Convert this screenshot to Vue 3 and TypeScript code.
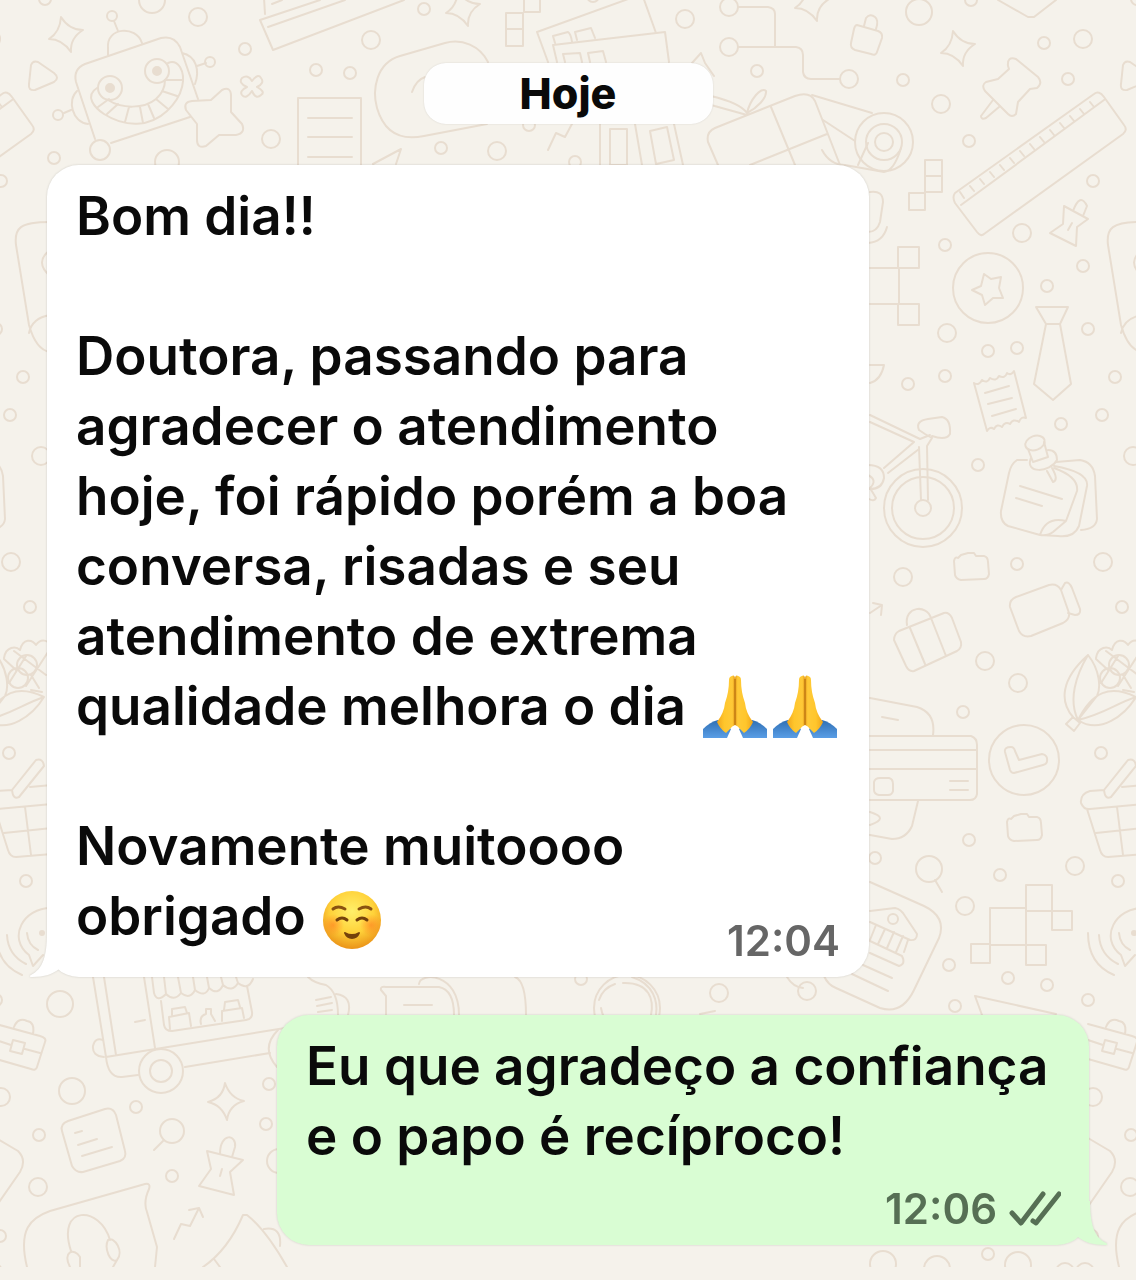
<script setup lang="ts">
interface Message {
  id: number
  side: 'in' | 'out'
  time: string
  paragraphs: { text: string; emoji?: 'pray' | 'smile'; count?: number }[]
}

const messages: Message[] = [
  {
    id: 1,
    side: 'in',
    time: '12:04',
    paragraphs: [
      { text: 'Bom dia!!' },
      {
        text: 'Doutora, passando para agradecer o atendimento hoje, foi rápido porém a boa conversa, risadas e seu atendimento de extrema qualidade melhora o dia',
        emoji: 'pray',
        count: 2,
      },
      { text: 'Novamente muitoooo obrigado', emoji: 'smile', count: 1 },
    ],
  },
  {
    id: 2,
    side: 'out',
    time: '12:06',
    paragraphs: [{ text: 'Eu que agradeço a confiança e o papo é recíproco!' }],
  },
]

// Loose dots of the wallpaper: x, y, radius
const dots: number[][] = [
  [45, -1, 6], [152, 0, 13], [198, 17, 9], [245, 49, 6], [271, 139, 9], [316, 70, 6], [350, 73, 6],
  [371, 40, 9], [167, 162, 12], [54, 158, 6], [1, 181, 6], [424, 9, 6], [685, 19, 9], [757, 71, 6],
  [497, 151, 9], [441, 148, 6], [529, 125, 6], [575, 162, 6], [593, -4, 6], [919, 12, 13], [971, 0, 6],
  [1044, 43, 6], [1083, 39, 9], [1068, 79, 6], [903, 80, 6], [941, 104, 9], [969, 141, 6],
  [1022, 233, 9], [945, 245, 6], [1083, 266, 6], [1047, 286, 6], [947, 333, 9], [1088, 329, 6],
  [988, 351, 6], [1017, 348, 6], [945, 376, 6], [908, 384, 6], [1115, 377, 6], [1102, 415, 6],
  [1061, 424, 6], [978, 465, 6], [1133, 456, 9], [1103, 562, 9], [1017, 564, 6], [903, 577, 9],
  [1122, 607, 6], [985, 661, 9], [1018, 683, 9], [963, 712, 6], [1101, 753, 6], [969, 840, 6],
  [875, 858, 6], [1000, 875, 6], [965, 906, 9], [1075, 866, 9], [1118, 881, 6], [949, 965, 6],
  [1008, 978, 6], [1047, 985, 6], [1088, 1000, 6], [955, 1006, 6], [807, 991, 9], [719, 993, 9],
  [581, 979, 6], [60, 1004, 13], [72, 1091, 13], [136, 1107, 6], [39, 1135, 6], [38, 1187, 9],
  [1, 1097, 9], [172, 1176, 6], [269, 1084, 6], [266, 1124, 6], [279, 1161, 12], [0, 1236, 6],
  [883, 1264, 13], [937, 1269, 13], [988, 1254, 6], [1018, 1265, 13], [1065, 1272, 9], [1085, 1272, 9],
]
</script>

<template>
  <main class="chat">
    <svg class="wallpaper" aria-hidden="true">
      <defs>
        <path id="sparkle" d="M-5-18Q3-5 17-5Q4 3 5 17Q-4 4-17 4Q-6-3-5-18Z" />
        <g id="tile">
          <circle v-for="(d, i) in dots" :key="i" :cx="d[0]" :cy="d[1]" :r="d[2]" />
          <!-- sparkles -->
          <use href="#sparkle" x="66" y="35" />
          <use href="#sparkle" x="463" y="9" />
          <use href="#sparkle" x="812" y="4" />
          <use href="#sparkle" x="958" y="49" />
          <path d="M225 1083Q230 1098 244 1101Q229 1105 227 1120Q222 1105 208 1102Q223 1098 225 1083Z" />
          <!-- robot -->
          <path d="M38 62L54 73Q60 78 54 82L35 90Q28 91 29 84L31 65Q33 60 38 62Z" />
          <path d="M95 139L76 82Q73 69 85 64L161 38Q174 35 180 47L198 99M190 117L111 143M108 55V48C106 27 136 25 142 43M118 31L114 21M182 53C196 56 200 70 195 84M197 66L206 63M77 91C67 100 72 122 88 124M71 110L64 113" />
          <circle cx="100" cy="150" r="10" /><circle cx="112" cy="16" r="5" /><circle cx="210" cy="62" r="5" /><circle cx="58" cy="115" r="5" />
          <circle cx="110" cy="88" r="12" /><circle cx="157" cy="71" r="12" />
          <circle class="fill" cx="110" cy="88" r="4" /><circle class="fill" cx="157" cy="71" r="4" />
          <path d="M97 88C84 96 95 108 104 114C126 128 150 127 167 111C184 95 186 77 180 67Q175 60 168 63M108 100C122 109 144 109 156 99C164 92 165 86 165 80M165 80H183M162 91L177 96M156 99L168 109M148 104L154 118M140 107L143 123M129 107L125 122M118 104L107 114M109 99L98 107" />
          <path d="M211 100L222 90Q231 86 231 96V112L242 124Q246 133 236 135H219L206 146Q197 149 197 140V124L186 110Q183 102 192 101Z" />
          <path d="M252 81Q258 73 261 78Q265 83 257 87Q266 92 261 95Q256 100 252 91Q246 100 242 95Q239 91 247 87Q238 83 242 78Q248 74 252 81Z" />
          <!-- notepad, envelope, card, blocks -->
          <path d="M298 170V98H361V170M308 118H352M308 137H352M308 157H352" />
          <path d="M320 0L260 20L273 50L404 0M268 27L345 0M264-2L265 14M272 4L282 0" />
          <path d="M488 62C480 46 462 38 445 43L400 56C376 63 372 90 377 108C384 132 400 141 424 136L487 124M412 92Q416 80 425 77" />
          <path d="M506 13H523V46H506ZM506 29H523M524-5H540V12H524Z" />
          <path d="M548 62L537 32L642-6L656 33M557 62L553 45L665 32L669 62M555 43L553 36L568 32Q571 34 572 42M577 40L575 32L591 28L595 38M565 62L563 54L580 53L582 62M590 62L588 53L603 51L606 62" />
          <circle cx="729" cy="7" r="9" /><circle cx="729" cy="47" r="9" /><circle cx="849" cy="79" r="9" />
          <path d="M738 7H768Q775 8 775 14V47M738 47H796Q803 48 803 55V72Q804 79 811 79H840M692 63L701 53L705 63L714 76" />
          <path d="M373 164L401 149L396 164M548 150L556 133L565 137L573 122M600 124V165M635 124L642 165M674 124L683 165M610 129H627V165H610ZM650 131L667 127L674 160L656 164Z" />
          <!-- gift and tape -->
          <path d="M718 165L708 142Q706 132 715 128L795 96Q810 91 815 101L840 165M771 107L795 165M750 165L827 134M747 113C750 100 761 86 766 91C767 98 757 108 747 113M711 96Q740 103 747 113M711 105L747 115" />
          <circle cx="884" cy="142" r="29" /><circle cx="884" cy="142" r="18" /><circle cx="884" cy="142" r="9" />
          <path d="M812 95L872 113M823 120L855 141M822 150Q830 165 845 165L884 172Q894 171 901 148M858 165L868 143" />
          <path d="M857 25L878 31Q883 33 882 38L877 52Q876 56 871 54L855 50Q850 48 851 43L854 29Q855 25 857 25ZM864 26L866 18Q870 13 875 17Q879 20 876 29" />
          <path d="M998 0L1028 17L1034 17L1056 0" />
          <path d="M1008 66Q1007 56 1016 59L1038 77Q1043 83 1037 88L1030 89L1018 102L1016 114Q1012 118 1008 114L985 91Q981 85 986 82L998 79L1009 69ZM993 100L981 116Q981 120 986 118L999 107" />
          <!-- ruler -->
          <path d="M955 193L1094 94Q1099 90 1104 97L1124 125Q1128 130 1123 134L984 234Q981 237 977 232L955 203Q952 197 955 193ZM961 205L1104 100M960 192L964 198M970 186L974 191M980 179L984 184M990 172L994 177M1000 165L1004 170M1010 158L1014 163M1020 151L1024 156M1030 144L1034 149M1040 137L1044 142M1050 130L1054 135M1060 123L1064 128M1070 116L1074 121M1080 109L1084 114M1090 102L1094 107" />
          <path d="M925 160H942V192H925ZM925 176H942M909 193H925V210H909ZM870 192Q883 190 883 202L880 222Q877 232 868 232M887 227Q883 242 868 243" />
          <path d="M1064 206L1088 219L1077 227L1076 246L1050 233L1063 224ZM1073 211Q1080 192 1087 206L1083 216M1072 223L1068 230" />
          <!-- nodes, badge, tie, receipt -->
          <path d="M898 247H919V268H898ZM898 304H919V325H898ZM870 268H898M899 268V304M870 304H898" />
          <circle cx="988" cy="288" r="35" />
          <path d="M984 274L991 279L1001 277L999 288L1003 298L993 298L985 305L982 295L972 290L981 286Z" />
          <path d="M1036 307H1068L1060 324H1046ZM1046 324L1034 384L1053 400L1071 384L1060 324" />
          <path d="M974 383Q979 386 982 380Q987 384 990 378Q996 382 999 376Q1005 379 1007 373Q1011 376 1014 371L1026 418Q1021 416 1019 422Q1013 418 1010 424Q1005 421 1002 427Q997 423 994 429Q990 426 987 431ZM985 393L1009 386M988 404L1012 398M992 416L1016 409" />
          <path d="M1142 222C1112 222 1106 228 1108 245L1121 325Q1128 350 1142 352M1142 315Q1124 318 1121 333M1142 250Q1126 262 1142 276" />
          <!-- bicycle -->
          <circle cx="923" cy="508" r="39" /><circle cx="923" cy="508" r="31" /><circle cx="923" cy="508" r="8" />
          <path d="M870 415L920 439L930 435M870 422L914 442L884 468M919 449L888 473M919 447L921 500M927 446L928 500M927 446L932 438L925 434L919 430Q915 421 928 419L942 417Q951 419 950 434Q946 441 932 436M868 465Q884 465 884 478Q882 490 868 489M868 475Q878 480 870 488L876 498Q874 502 869 499M870 365H884Q881 380 870 383" />
          <!-- pinned notes -->
          <path d="M1027 460H1017Q1011 464 1009 473L1001 511Q1000 522 1008 526L1040 535Q1048 536 1053 532L1066 521L1077 491Q1079 477 1054 468M1056 462L1080 460Q1093 462 1095 476L1097 519Q1096 529 1081 530M1054 466Q1089 472 1087 486L1079 526Q1074 538 1058 536L1040 535Q1046 516 1066 521M1020 486L1062 499M1016 498L1042 506" />
          <ellipse cx="1035" cy="443" rx="10" ry="7" transform="rotate(-20 1035 443)" />
          <path d="M1028 449L1033 462L1048 457L1044 442M1031 458C1024 474 1050 473 1057 460Q1057 450 1048 450M1047 471L1053 482Q1059 480 1052 468" />
          <!-- folders, camera, suitcase -->
          <path d="M961 555L968 553H974L976 556H984Q988 557 988 562L989 574Q988 579 984 579L961 580Q956 579 955 575L954 561Q955 556 958 558Z" />
          <path d="M1014 816L1021 814H1027L1029 817H1037Q1041 818 1041 823L1042 835Q1041 840 1037 840L1014 841Q1009 840 1008 836L1007 822Q1008 817 1011 819Z" />
          <path d="M1016 597L1049 585Q1057 583 1061 590L1069 613Q1070 619 1063 623L1031 636Q1023 638 1019 631L1010 607Q1009 600 1016 597ZM1061 590L1065 583Q1069 581 1072 588L1080 609Q1081 615 1075 615L1068 613" />
          <path d="M899 631L944 613Q949 612 952 618L961 642Q962 648 957 651L914 671Q909 672 906 666L894 640Q894 634 899 631ZM907 625C904 606 927 604 931 618M910 628L925 664M931 618L946 656M870 613L882 605L873 603M882 605L881 615" />
          <!-- corn -->
          <path d="M1073 717C1060 702 1060 680 1088 655C1100 670 1101 688 1097 696L1078 720C1068 700 1076 675 1088 655M1078 720C1100 735 1125 715 1136 697C1110 684 1092 692 1078 720M1078 720C1104 714 1115 704 1136 697M1073 717L1080 723L1074 731L1066 724ZM1096 658C1098 646 1108 646 1112 650C1115 638 1124 639 1128 645Q1133 638 1140 642M1096 659L1108 670M1106 651L1138 675M1123 675L1131 688M1101 683L1118 656M1118 686L1140 652M1123 690L1134 692" />
          <circle cx="1110" cy="678" r="10" /><circle cx="1119" cy="665" r="10" />
          <!-- bank cards and clock -->
          <path d="M870 698L917 707Q936 713 933 735M870 736H971Q977 738 977 745V794Q976 800 970 800H870M870 750H977M870 769H977M874 782Q875 778 880 778H889Q893 779 893 784V791Q892 795 888 795H879Q874 794 874 790ZM950 781H968M950 790H968M918 801L912 826Q906 839 892 839L870 835M870 812Q890 818 870 825M882 717L898 720" />
          <circle cx="1024" cy="760" r="35" />
          <path d="M1005 752Q1004 747 1011 747Q1014 747 1015 751L1019 760L1042 754Q1048 755 1047 761Q1047 764 1043 765L1014 773Q1011 773 1010 770Z" />
          <!-- basket -->
          <path d="M1104 790L1090 791Q1080 794 1081 803Q1084 810 1090 809L1144 804M1122 787L1144 785M1087 809L1100 850Q1102 857 1108 857L1144 854M1117 807L1123 855M1096 833L1144 828M1104 790L1128 760Q1135 758 1136 766L1111 797Q1105 800 1104 790Z" />
          <!-- magnifier, bank, blocks -->
          <circle cx="929" cy="869" r="13" /><path d="M935 880L942 892" />
          <path d="M870 882L924 906Q947 917 939 938L914 990Q902 1015 880 1008L836 988Q828 985 824 976M870 911L895 908Q901 909 905 916L917 934Q917 941 910 940L870 922M876 925L870 940M885 929L878 944M894 932L887 948M903 936L896 952M908 940L904 952M870 941L902 956Q906 964 899 966L870 953M863 965L892 978M852 974L888 991" />
          <circle cx="893" cy="919" r="5" />
          <path d="M1026 885H1052V911H1026ZM1052 911H1072V930H1052ZM990 908H1026V945H990ZM971 944H990V963H971ZM1026 945H1046V965H1026Z" />
          <path d="M1143 908C1115 908 1099 938 1121 955L1125 966L1135 955M1119 933Q1120 945 1130 950M1088 933Q1088 964 1114 975M1099 935Q1100 955 1118 964" />
          <circle class="fill" cx="1134" cy="933" r="2" />
          <path d="M982 1015L975 996L1056 1014" />
          <!-- briefcase -->
          <path d="M-4 1024L40 1036Q47 1038 45 1042L37 1067Q36 1071 31 1069L-4 1059M14 1027Q18 1017 27 1021Q35 1022 33 1034M-4 1040L11 1045M25 1049L40 1053M13 1040L25 1043L22 1054L10 1051Z" />
          <!-- food truck -->
          <path d="M93 977L106 1057Q108 1078 122 1077L138 1075M104 977L116 1055M144 977L155 1048M106 1057L285 1028M185 1067L270 1053M135 1022L145 1020M161 1001L164 1025Q165 1031 172 1031L246 1020Q253 1019 252 1012L247 986" />
          <path d="M152 977L154 993Q157 1003 166 994L164 977M166 994Q174 1002 181 993L178 977M181 993Q190 1000 195 990L193 977M195 990Q205 998 209 988L207 977M209 988Q218 996 223 985L221 977M223 985Q232 993 238 983L236 977M238 983Q248 991 253 979" />
          <path d="M170 1029L169 1017L189 1013L191 1026M172 1015V1009L185 1007L187 1013M201 1024Q199 1016 206 1014V1009H211V1014L215 1021M222 1021V1011L242 1008L244 1018M224 1010L225 1002L238 1000L240 1007M104 1057Q92 1056 93 1046Q95 1037 103 1040M278 1030Q260 1048 277 1067" />
          <circle cx="161" cy="1071" r="22" /><circle cx="161" cy="1071" r="11" />
          <!-- bubble, sheet, pin, arrow -->
          <path d="M68 1121L105 1109Q113 1107 116 1115L125 1151Q127 1158 120 1161L83 1172Q76 1173 72 1166L62 1131Q60 1124 68 1121ZM75 1133L82 1131M78 1145L97 1139M82 1156L112 1147" />
          <circle cx="172" cy="1131" r="12" /><path d="M163 1141L154 1150" />
          <path d="M207 1151L243 1160L230 1172L234 1195L199 1186L211 1169ZM220 1154C220 1132 237 1134 235 1147L232 1157M222 1169L220 1176M174 1239L181 1224L190 1226L199 1208M189 1210L199 1208L203 1217" />
          <path d="M-4 1138L18 1151Q27 1160 20 1172L-5 1208M27 1267C18 1230 30 1218 50 1211L145 1184Q151 1183 149 1189Q143 1202 147 1212L157 1247L155 1267M71 1251C56 1205 100 1205 110 1240M70 1267C62 1252 74 1247 80 1257V1267M108 1240C115 1236 124 1252 117 1260C110 1264 104 1248 108 1240M117 1260L113 1267M203 1267Q228 1250 243 1215L247 1215Q266 1230 287 1267M214 1259L220 1267M264 1229Q282 1226 280 1246" />
          <!-- objects between the two messages -->
          <path d="M308 977Q314 983 326 985Q338 992 338 1015M316 1000L331 997M317 1006L332 1003M318 1012L332 1010M336 994Q353 996 348 1015M386 1015V996L381 990Q380 986 386 987H439Q454 990 454 1015M404 1005H432M419 984C420 972 459 972 459 1015M515 977Q526 981 526 1015M787 977Q793 987 803 988M700 1014L715 1011" />
          <circle cx="627" cy="1008" r="33" /><path d="M599 1000Q603 988 615 984M601 1008Q602 1013 603 1015M623 983C650 982 654 1000 651 1015M632 977C654 984 658 1002 656 1015" />
        </g>
      </defs>
      <use href="#tile" x="-1092" />
      <use href="#tile" />
      <use href="#tile" x="1092" />
    </svg>

    <time class="day">Hoje</time>

    <article v-for="m in messages" :key="m.id" class="bubble" :class="m.side">
      <svg class="tail" width="44" height="44" viewBox="0 0 44 44" aria-hidden="true">
        <path d="M17 0C17 23 13 36 1 42C-1 43 0 44 2 44C14 44 23 41 29 36L44 30V0Z" />
      </svg>
      <div class="body">
        <p v-for="(p, i) in m.paragraphs" :key="i">
          {{ p.text }}
          <span v-if="p.emoji" class="emojis">
            <template v-for="n in p.count" :key="n">
              <svg v-if="p.emoji === 'pray'" class="pray" viewBox="0 0 64 64" role="img" aria-label="🙏">
                <defs>
                  <linearGradient id="skin" x1="0" x2="1">
                    <stop offset="0" stop-color="#f0a51c" />
                    <stop offset=".4" stop-color="#ffc62c" />
                    <stop offset=".85" stop-color="#ffca38" />
                    <stop offset="1" stop-color="#e59a18" />
                  </linearGradient>
                  <linearGradient id="sleeve" x1="0" y1="0" x2="0" y2="1">
                    <stop offset="0" stop-color="#2f6fb4" />
                    <stop offset="1" stop-color="#5a9ee6" />
                  </linearGradient>
                </defs>
                <g>
                  <path fill="url(#sleeve)" d="M0 54Q7 47 15 45L28 54L24 63H0Z" />
                  <path fill="url(#skin)" d="M27 2Q32-2 32 4V50Q29 51 27 54L23 58Q17 54 14 47Q21 38 22 28Q26 17 26 5Q26 3 27 2Z" />
                </g>
                <g transform="translate(64 0) scale(-1 1)">
                  <path fill="url(#sleeve)" d="M0 54Q7 47 15 45L28 54L24 63H0Z" />
                  <path fill="url(#skin)" d="M27 2Q32-2 32 4V50Q29 51 27 54L23 58Q17 54 14 47Q21 38 22 28Q26 17 26 5Q26 3 27 2Z" />
                </g>
                <path d="M32 4V50" fill="none" stroke="#b06a10" stroke-width="1" />
              </svg>
              <svg v-else class="smile" viewBox="0 0 58 58" role="img" aria-label="☺️">
                <defs>
                  <radialGradient id="face" cx=".5" cy=".35" r=".68">
                    <stop offset="0" stop-color="#fff06a" />
                    <stop offset=".55" stop-color="#ffd23a" />
                    <stop offset="1" stop-color="#e88c14" />
                  </radialGradient>
                  <radialGradient id="cheek">
                    <stop offset="0" stop-color="#ff7a20" stop-opacity=".6" />
                    <stop offset="1" stop-color="#ff7a20" stop-opacity="0" />
                  </radialGradient>
                </defs>
                <circle cx="29" cy="29" r="29" fill="url(#face)" />
                <circle cx="10" cy="34" r="11" fill="url(#cheek)" /><circle cx="48" cy="34" r="11" fill="url(#cheek)" />
                <path d="M10 18Q15 14 22 18M36 18Q43 14 48 18" fill="none" stroke="#8a5210" stroke-width="3" stroke-linecap="round" />
                <path d="M14 29Q19 25 24 29M34 29Q39 25 44 29" fill="none" stroke="#75420b" stroke-width="3" stroke-linecap="round" />
                <path d="M22 42Q29 46 36 42Q34 47 29 47Q24 47 22 42Z" fill="#75420b" stroke="#75420b" stroke-width="2" stroke-linejoin="round" />
              </svg>
            </template>
          </span>
        </p>
      </div>
      <footer class="meta">
        <time>{{ m.time }}</time>
        <svg v-if="m.side === 'out'" class="ticks" width="52" height="36" viewBox="0 0 52 36" role="img" aria-label="Entregue">
          <path d="M3 22L12 32L34 3M24 30L27 32L50 3" />
        </svg>
      </footer>
    </article>
  </main>
</template>

<style>
body {
  margin: 0;
  background: #f5f2eb;
}
</style>

<style scoped>
.chat {
  position: relative;
  display: flex;
  flex-direction: column;
  box-sizing: border-box;
  min-height: 100vh;
  padding: 63px 47px 34px;
  overflow: hidden;
  background: #f5f2eb;
  color: #0a0a0a;
  font-family: Inter, "Liberation Sans", sans-serif;
}

.wallpaper {
  position: absolute;
  top: 0;
  left: 0;
  width: 100%;
  height: 1267px;
  fill: none;
  stroke: #e8ddd0;
  stroke-width: 2;
  stroke-linejoin: round;
  stroke-linecap: round;
}

.wallpaper .fill {
  fill: #e8ddd0;
}

.day {
  position: relative;
  align-self: center;
  box-sizing: border-box;
  width: 289px;
  margin-bottom: 41px;
  border-radius: 22px;
  background: #fefefe;
  box-shadow: 0 0 2px #0000001f;
  font-size: 43px;
  font-weight: 800;
  line-height: 61px;
  text-align: center;
}

.bubble {
  position: relative;
  box-sizing: border-box;
  width: 100%;
  border-radius: 32px;
  filter: drop-shadow(0 0 1px #00000026);
}

.in {
  align-self: flex-start;
  max-width: 822px;
  margin-bottom: 38px;
  padding: 16px 24px 26px 29px;
  background: #fff;
}

.out {
  align-self: flex-end;
  max-width: 812px;
  padding: 16px 28px 6px 29px;
  background: #d9fdd3;
}

.tail {
  position: absolute;
  bottom: 0;
  left: -17px;
  fill: #fff;
}

.out .tail {
  right: -18px;
  left: auto;
  fill: #d9fdd3;
  transform: scaleX(-1);
}

.body {
  position: relative;
}

p {
  margin: 0 0 70px;
  font-size: 53px;
  font-weight: 580;
  line-height: 70px;
}

p:last-child {
  margin-bottom: 0;
}

.emojis {
  display: inline-flex;
  gap: 6px;
  height: 64px;
  margin: -8px 0 -8px 4px;
  vertical-align: -14px;
}

.pray {
  width: 64px;
  height: 64px;
}

.smile {
  width: 58px;
  height: 58px;
  margin: 0 0 4px;
}

.meta {
  display: flex;
  justify-content: flex-end;
  align-items: center;
  gap: 12px;
  color: #666;
  font-size: 42px;
  font-weight: 560;
  line-height: 60px;
}

.in .meta {
  position: absolute;
  right: 29px;
  bottom: 6px;
}

.out .meta {
  padding-top: 8px;
  color: #566f54;
}

.ticks {
  fill: none;
  stroke: #566f54;
  stroke-width: 5;
  stroke-linecap: round;
  stroke-linejoin: round;
}
</style>
